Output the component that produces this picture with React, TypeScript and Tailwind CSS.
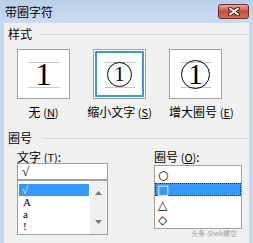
const cjk = "font-['Noto_Sans_CJK_SC','Noto_Sans',sans-serif]";
const serif = "font-['Liberation_Serif',serif]";

function CloseButton() {
  return (
    <div className="w-[31px] h-[15px] rounded-[3px] border border-[#6e2a24] bg-linear-to-b from-[#e9a99e] via-[#c8493b] to-[#d2705f] flex items-center justify-center">
      <svg width="12" height="9" viewBox="0 0 12 9">
        <path d="M2 1.5 L10 7.5 M10 1.5 L2 7.5" stroke="#4a1a16" strokeWidth="4" strokeLinecap="round" />
        <path d="M2 1.5 L10 7.5 M10 1.5 L2 7.5" stroke="#ffffff" strokeWidth="2" strokeLinecap="round" />
      </svg>
    </div>
  );
}

function GroupTitle({ title, gap }: { title: string; gap: string }) {
  return (
    <div className={`flex items-center h-[14px] pl-[4px] ${gap}`}>
      <span className="text-[12px] leading-[14px]">{title}</span>
      <div className="flex-1 h-px bg-[#d9d9d9]" />
    </div>
  );
}

function GuideLines() {
  return (
    <>
      <div className="absolute left-[10px] right-[9px] top-[12px] h-px bg-[#c8c8c8]" />
      <div className="absolute left-[10px] right-[9px] top-[37px] h-px bg-[#c8c8c8]" />
    </>
  );
}

function Hot({ k }: { k: string }) {
  return (
    <span className="text-[11px]">
      (<u>{k}</u>)
    </span>
  );
}

function ListRow({ children, selected }: { children: React.ReactNode; selected?: boolean }) {
  return (
    <div
      className={`h-[12px] flex items-center overflow-hidden ${
        selected ? "bg-[#3399ff] text-white pl-[3px]" : "pl-[4px]"
      }`}
    >
      <span className="text-[11px] leading-[10px]">{children}</span>
    </div>
  );
}

export default function App() {
  return (
    <div className={`w-[253px] h-[243px] overflow-hidden bg-[#c4d7ed] flex flex-col text-black ${cjk}`}>
      <div className="h-[23px] shrink-0 flex items-center pl-[5px] pr-[4px] bg-linear-to-b from-[#b8cfe9] to-[#c9dbef]">
        <span className="text-[12px] leading-[14px]">带圈字符</span>
        <div className="ml-auto">
          <CloseButton />
        </div>
      </div>

      <div className="relative flex-1 mx-[4px] bg-[#f0f0f0] flex flex-col pt-[4px]">
        <GroupTitle title="样式" gap="gap-[8px]" />

        <div className="grid grid-cols-[53px_53px_53px] gap-x-[23px] pl-[13px] mt-[8px]">
          <div className="relative w-[53px] h-[50px] border border-[#a0a0a0] bg-white flex items-center justify-center">
            <GuideLines />
            <span className={`relative text-[32px] leading-none ${serif}`}>1</span>
          </div>
          <div className="w-[53px] h-[50px] border border-[#a0a0a0] bg-white p-px">
            <div className="relative w-full h-full border-2 border-[#3d95e6] flex items-center justify-center">
              <div className="absolute left-[8px] right-[7px] top-[9px] h-px bg-[#c8c8c8]" />
              <div className="absolute left-[8px] right-[7px] top-[34px] h-px bg-[#c8c8c8]" />
              <div className="relative w-[25px] h-[25px] rounded-full border-[1.5px] border-black flex items-center justify-center">
                <span className={`text-[21px] leading-none ${serif}`}>1</span>
              </div>
            </div>
          </div>
          <div className="relative w-[53px] h-[50px] border border-[#a0a0a0] bg-white flex items-center justify-center">
            <GuideLines />
            <div className="relative w-[29px] h-[29px] rounded-full border-[1.5px] border-black flex items-center justify-center">
              <span className={`text-[30px] leading-none ${serif}`}>1</span>
            </div>
          </div>

          <div className="mt-[6px] h-[14px] text-center whitespace-nowrap text-[12px] leading-[14px]">
            无&nbsp;<Hot k="N" />
          </div>
          <div className="mt-[6px] h-[14px] -mx-[10px] text-center whitespace-nowrap text-[12px] leading-[14px]">
            缩小文字&nbsp;<Hot k="S" />
          </div>
          <div className="mt-[6px] h-[14px] -mx-[10px] pl-[10px] text-center whitespace-nowrap text-[12px] leading-[14px]">
            增大圈号&nbsp;<Hot k="E" />
          </div>
        </div>

        <div className="mt-[12px]">
          <GroupTitle title="圈号" gap="gap-[10px]" />
        </div>

        <div className="flex mt-[5px] pl-[13px]">
          <div className="w-[91px] flex flex-col">
            <div className="h-[13px] text-[12px] leading-[13px] whitespace-nowrap">
              文字&nbsp;<Hot k="T" />:
            </div>
            <div className={`h-[17px] border border-[#a0a0a0] bg-white flex items-center pl-[4px] text-[13px] leading-none ${serif}`}>
              √
            </div>
            <div className="h-[55px] border border-[#a0a0a0] bg-white flex">
              <div className={`flex-1 pt-[3px] pl-px pr-px ${serif}`}>
                <ListRow selected>√</ListRow>
                <ListRow>A</ListRow>
                <ListRow>a</ListRow>
                <ListRow>!</ListRow>
              </div>
              <div className="w-[17px] bg-[#efefef] flex flex-col items-center justify-between py-[10px]">
                <svg width="7" height="4" viewBox="0 0 7 4">
                  <path d="M0 4 L3.5 0 L7 4 Z" fill="#7a7a7a" />
                </svg>
                <svg width="7" height="4" viewBox="0 0 7 4">
                  <path d="M0 0 L3.5 4 L7 0 Z" fill="#7a7a7a" />
                </svg>
              </div>
            </div>
          </div>

          <div className="ml-[46px] w-[88px] flex flex-col">
            <div className="h-[13px] text-[12px] leading-[13px] whitespace-nowrap">
              圈号&nbsp;<Hot k="O" />:
            </div>
            <div className="mt-[2px] h-[64px] border border-[#a0a0a0] bg-white pt-px font-['DejaVu_Sans',sans-serif] text-[12px] leading-none">
              <div className="h-[15px] flex items-center pl-[3px]">○</div>
              <div className="h-[15px] flex items-center">
                <div className="w-full h-[13px] bg-[#3399ff] border border-dotted border-[#3a3020] text-white flex items-center pl-[1px] text-[13px]">
                  □
                </div>
              </div>
              <div className="h-[15px] flex items-center pl-[3px]">△</div>
              <div className="h-[15px] flex items-center pl-[3px]">◇</div>
            </div>
          </div>
        </div>

        <div className="absolute bottom-[6px] right-[12px] text-[7px] leading-[7px] text-[#a0a0a0] whitespace-nowrap">
          头条 @wk螺空
        </div>
      </div>
    </div>
  );
}
